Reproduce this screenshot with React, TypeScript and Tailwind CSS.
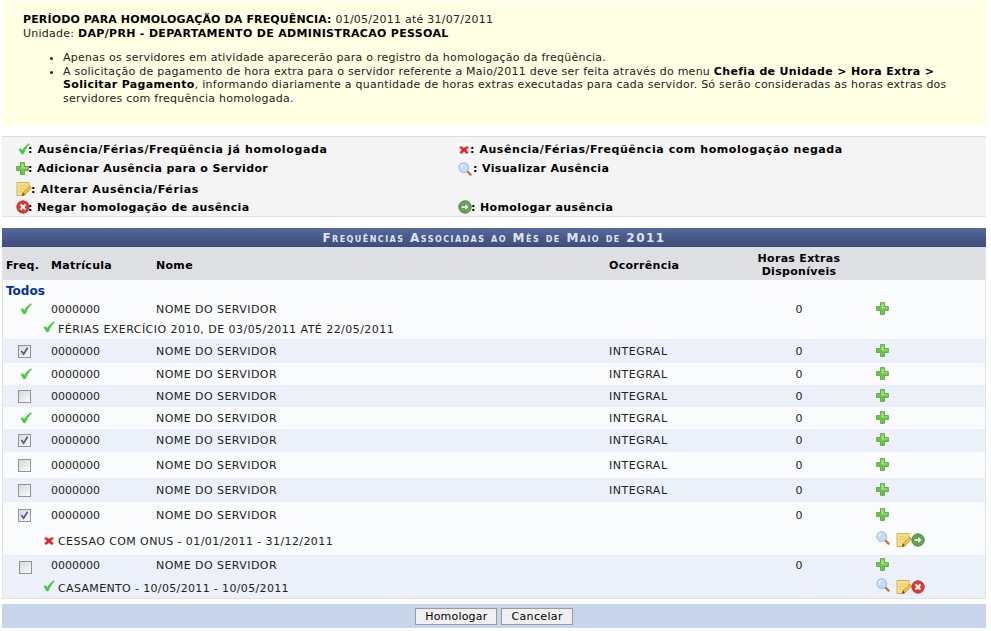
import React from 'react';

const font = "[font-family:'DejaVu_Sans',Verdana,sans-serif]";

function Check({ className = '' }: { className?: string }) {
  return (
    <svg viewBox="0 0 12 12" className={`w-3 h-3 shrink-0 ${className}`}>
      <path d="M0.8 6.4 L2.8 5.4 L4.3 7.4 C5.6 5 7.8 2.4 11 0.6 L11.6 1.2 C9 3.6 6.8 7 5.4 11 L3.6 11 Z" fill="#28dc28" stroke="#8fa58f" strokeWidth="0.45" />
    </svg>
  );
}

function Cross({ className = '' }: { className?: string }) {
  return (
    <svg viewBox="0 0 12 13" className={`w-3 h-[13px] shrink-0 bg-white ${className}`}>
      <path d="M2.6 3 L6 4.8 L9.4 3 L10.8 4.6 L8.2 6.8 L10.6 9.4 L8.8 11 L6 8.8 L3.2 11 L1.4 9.4 L3.8 6.8 L1.2 4.6 Z" fill="#ee1c25" stroke="#f2a0a0" strokeWidth="0.4" />
    </svg>
  );
}

function Plus({ className = '' }: { className?: string }) {
  return (
    <svg viewBox="0 0 13 13" className={`w-[13px] h-[13px] shrink-0 ${className}`}>
      <path d="M4.5 0.6 H8.5 V4.5 H12.4 V8.5 H8.5 V12.4 H4.5 V8.5 H0.6 V4.5 H4.5 Z" fill="#6cc644" stroke="#5c9c48" strokeWidth="0.8" />
      <path d="M5.5 1.6 H7.5 V5.5 H11.4 V6.5 H5.5 Z" fill="#a9e57f" />
    </svg>
  );
}

function Lens({ className = '' }: { className?: string }) {
  return (
    <svg viewBox="0 0 14 14" className={`w-[14px] h-[14px] shrink-0 ${className}`}>
      <path d="M9.2 9.2 L12.6 12.6" stroke="#b5793f" strokeWidth="2.2" strokeLinecap="round" />
      <circle cx="5.7" cy="5.7" r="4.9" fill="#c6dcf5" stroke="#9dbbdf" strokeWidth="1" />
      <path d="M2.9 5.4 A2.9 2.9 0 0 1 5.6 2.7" fill="none" stroke="#fff" strokeWidth="1.1" />
    </svg>
  );
}

function Note({ className = '' }: { className?: string }) {
  return (
    <svg viewBox="0 0 16 16" className={`w-4 h-4 shrink-0 ${className}`}>
      <path d="M1 1.5 H13 V9 L8 14.5 H1 Z" fill="#fbe08a" stroke="#d5a93e" strokeWidth="0.9" />
      <path d="M3 5 H11 M3 7.5 H9 M3 10 H6" stroke="#e3bd62" strokeWidth="0.8" />
      <path d="M6 14.8 L7 11.5 L13.5 5 L15.5 7 L9 13.6 Z" fill="#f0c040" stroke="#b98a2a" strokeWidth="0.7" />
      <path d="M6 14.8 L7 11.5 L9 13.6 Z" fill="#6b4a20" />
    </svg>
  );
}

function Deny({ className = '' }: { className?: string }) {
  return (
    <svg viewBox="0 0 14 14" className={`w-[14px] h-[14px] shrink-0 ${className}`}>
      <circle cx="7" cy="7" r="6.2" fill="#dd3b30" stroke="#a83a32" strokeWidth="0.9" />
      <path d="M4.6 4.6 L9.4 9.4 M9.4 4.6 L4.6 9.4" stroke="#fff" strokeWidth="2.1" />
    </svg>
  );
}

function Approve({ className = '' }: { className?: string }) {
  return (
    <svg viewBox="0 0 14 14" className={`w-[14px] h-[14px] shrink-0 ${className}`}>
      <circle cx="7" cy="7" r="6.2" fill="#62ad4f" stroke="#3f7a3a" strokeWidth="0.9" />
      <path d="M3 5.6 H7 V3 L11.2 7 L7 11 V8.4 H3 Z" fill="#e8efe8" stroke="#5a6a5a" strokeWidth="0.7" />
    </svg>
  );
}

function Box({ checked = false, className = '' }: { checked?: boolean; className?: string }) {
  return (
    <span className={`relative block w-[13px] h-[13px] ${className}`}>
      <input
        type="checkbox"
        defaultChecked={checked}
        className="appearance-none block w-[13px] h-[13px] border border-[#8e9499] bg-gradient-to-br from-[#d8d8d4] to-[#fbfbfb]"
      />
      {checked && (
        <svg viewBox="0 0 13 13" className="absolute inset-0 w-[13px] h-[13px] pointer-events-none">
          <path d="M3.4 6 L5.6 9.2 L9.6 2.8" fill="none" stroke="#4a5f9a" strokeWidth="1.8" />
        </svg>
      )}
    </span>
  );
}

function Legend({ icon, label, className = '' }: { icon: React.ReactNode; label: string; className?: string }) {
  return (
    <div className={`flex items-center font-bold whitespace-nowrap ${className}`}>
      {icon}
      <span>: {label}</span>
    </div>
  );
}

type Row = {
  freq: 'check' | 'on' | 'off';
  ocorrencia?: string;
  h: string;
  alt?: boolean;
  boxClass?: string;
  sub?: { icon: 'check' | 'cross'; text: string; h: string; tracking: string; actions?: 'approve' | 'deny' };
};

const rows: Row[] = [
  { freq: 'check', h: 'h-[20px]', sub: { icon: 'check', text: 'FÉRIAS EXERCÍCIO 2010, DE 03/05/2011 ATÉ 22/05/2011', h: 'h-[20px]', tracking: 'tracking-[0.46px]' } },
  { freq: 'on', ocorrencia: 'INTEGRAL', h: 'h-[24px]', alt: true },
  { freq: 'check', ocorrencia: 'INTEGRAL', h: 'h-[22px]' },
  { freq: 'off', ocorrencia: 'INTEGRAL', h: 'h-[22px]', alt: true },
  { freq: 'check', ocorrencia: 'INTEGRAL', h: 'h-[22px]' },
  { freq: 'on', ocorrencia: 'INTEGRAL', h: 'h-[23px]', alt: true },
  { freq: 'off', ocorrencia: 'INTEGRAL', h: 'h-[26px]' },
  { freq: 'off', ocorrencia: 'INTEGRAL', h: 'h-[24px]', alt: true },
  { freq: 'on', h: 'h-[26px]', sub: { icon: 'cross', text: 'CESSAO COM ONUS - 01/01/2011 - 31/12/2011', h: 'h-[27px]', tracking: 'tracking-[0.41px]', actions: 'approve' } },
  { freq: 'off', h: 'h-[20px]', alt: true, boxClass: 'mt-[4px] ml-px', sub: { icon: 'check', text: 'CASAMENTO - 10/05/2011 - 10/05/2011', h: 'h-[23px]', tracking: 'tracking-[0.35px]', actions: 'deny' } },
];

export default function App() {
  return (
    <div className={`${font} w-[991px] h-[631px] bg-white text-[11px] leading-[13px] text-[#222] overflow-hidden pl-[2px] pr-[5px] pt-px`}>
      {/* Caixa de orientações */}
      <div className="ml-px h-[124px] bg-[#ffffe3] pl-[20px] pt-[11px] pr-[26px] tracking-[0.25px]">
        <p className="leading-[14px] mt-px">
          <b className="text-black tracking-[0.13px]">PERÍODO PARA HOMOLOGAÇÃO DA FREQUÊNCIA:</b> 01/05/2011 até 31/07/2011
          <br />
          Unidade: <b className="text-black tracking-[0.32px]">DAP/PRH - DEPARTAMENTO DE ADMINISTRACAO PESSOAL</b>
        </p>
        <ul className="list-disc pl-[40px] mt-[10px] leading-[13.5px]">
          <li>Apenas os servidores em atividade aparecerão para o registro da homologação da freqüência.</li>
          <li>
            A solicitação de pagamento de hora extra para o servidor referente a Maio/2011 deve ser feita através do menu{' '}
            <b className="text-black tracking-[0.34px]">Chefia de Unidade &gt; Hora Extra &gt;</b>{' '}
            <b className="text-black tracking-[0.34px]">Solicitar Pagamento</b>, informando diariamente a quantidade de horas extras executadas para cada servidor. Só serão consideradas as horas extras dos servidores com frequência homologada.
          </li>
        </ul>
      </div>

      {/* Legenda */}
      <div className="mt-[11px] h-[81px] bg-[#f4f4f4] border-y border-[#dfdfdf] text-black grid grid-cols-[442px_1fr] grid-rows-[20px_19px_22px_14px] pt-[2px] pl-[14px]">
        <Legend icon={<Check className="ml-[2px] -mr-[2px]" />} label="Ausência/Férias/Freqüência já homologada" className="tracking-[0.62px]" />
        <Legend icon={<Cross />} label="Ausência/Férias/Freqüência com homologação negada" className="tracking-[0.57px]" />
        <Legend icon={<Plus className="-mr-px" />} label="Adicionar Ausência para o Servidor" className="tracking-[0.38px]" />
        <Legend icon={<Lens className="mr-px" />} label="Visualizar Ausência" className="tracking-[0.36px]" />
        <Legend icon={<Note className="-mr-px" />} label="Alterar Ausência/Férias" className="col-span-2 tracking-[0.6px]" />
        <Legend icon={<Deny className="-mr-[2px]" />} label="Negar homologação de ausência" className="tracking-[0.38px]" />
        <Legend icon={<Approve className="-mr-px" />} label="Homologar ausência" className="tracking-[0.38px]" />
      </div>

      {/* Tabela */}
      <div className="mt-[11px] h-[19px] bg-gradient-to-b from-[#55699b] to-[#3f4f7d] border-b border-[#3a4a78] text-center font-bold text-[#dfe5f2] tracking-[1.45px] [font-variant:small-caps] leading-[20px] text-[12px]">
        Frequências Associadas ao Mês de Maio de 2011
      </div>
      <div className="border-x border-b border-[#dfe3e8]">
        <table className="w-full table-fixed border-collapse">
          <colgroup>
            <col className="w-[48px]" />
            <col className="w-[105px]" />
            <col className="w-[453px]" />
            <col className="w-[136px]" />
            <col className="w-[108px]" />
            <col />
          </colgroup>
          <thead>
            <tr className="h-[33px] bg-[#dedfe3] text-black tracking-[0.3px]">
              <th className="text-left font-bold pl-[3px] pt-[3px]">Freq.</th>
              <th className="text-left font-bold pt-[3px]">Matrícula</th>
              <th className="text-left font-bold pt-[3px]">Nome</th>
              <th className="text-left font-bold pt-[3px]">Ocorrência</th>
              <th className="text-center font-bold pt-[2px] whitespace-nowrap">
                Horas Extras
                <br />
                Disponíveis
              </th>
              <th />
            </tr>
          </thead>
          <tbody>
            <tr className="h-[19px] bg-[#f9fbfd]">
              <td colSpan={6} className="pl-[3px] pt-[3px] font-bold text-[#003399] text-[12px]">Todos</td>
            </tr>
            {rows.map((r, i) => {
              const bg = r.alt ? 'bg-[#ecf1f9]' : 'bg-[#f9fbfd]';
              return (
                <React.Fragment key={i}>
                  <tr className={`${r.h} ${bg}`}>
                    <td className="pl-[15px]">
                      {r.freq === 'check' ? <Check className="ml-[2px]" /> : <Box checked={r.freq === 'on'} className={r.boxClass} />}
                    </td>
                    <td>0000000</td>
                    <td className="tracking-[0.44px]">NOME DO SERVIDOR</td>
                    <td className="tracking-[0.5px]">{r.ocorrencia}</td>
                    <td className="text-center">0</td>
                    <td className="pl-[23px]">
                      <Plus className="-translate-y-px" />
                    </td>
                  </tr>
                  {r.sub && (
                    <tr className={`${r.sub.h} ${bg}`}>
                      <td colSpan={5} className={`pl-[40px] ${r.sub.tracking} ${r.sub.actions === 'deny' ? 'pt-[3px]' : ''}`}>
                        <div className="flex items-center gap-[3px]">
                          {r.sub.icon === 'check' ? <Check className="-mt-[4px]" /> : <Cross className="-mt-[2px]" />}
                          <span>{r.sub.text}</span>
                        </div>
                      </td>
                      <td className="pl-[23px]">
                        {r.sub.actions && (
                          <div className={`flex items-center ${r.sub.actions === 'approve' ? '-mt-[4px]' : ''}`}>
                            <Lens className="mr-[6px] -translate-y-[2px]" />
                            <Note />
                            {r.sub.actions === 'approve' ? <Approve className="-ml-px" /> : <Deny className="-ml-px" />}
                          </div>
                        )}
                      </td>
                    </tr>
                  )}
                </React.Fragment>
              );
            })}
          </tbody>
        </table>
      </div>
      <div className="mt-[5px] h-[24px] pt-px bg-[#c8d4ea] flex items-center justify-center gap-[4px]">
        <button className="h-[17px] px-[9px] bg-[#f0f0f0] border border-[#9c9c9c] text-black text-[11px] leading-none tracking-[0.2px] [font-family:inherit]">Homologar</button>
        <button className="h-[17px] px-[9px] bg-[#f0f0f0] border border-[#9c9c9c] text-black text-[11px] leading-none tracking-[0.35px] [font-family:inherit]">Cancelar</button>
      </div>
    </div>
  );
}
